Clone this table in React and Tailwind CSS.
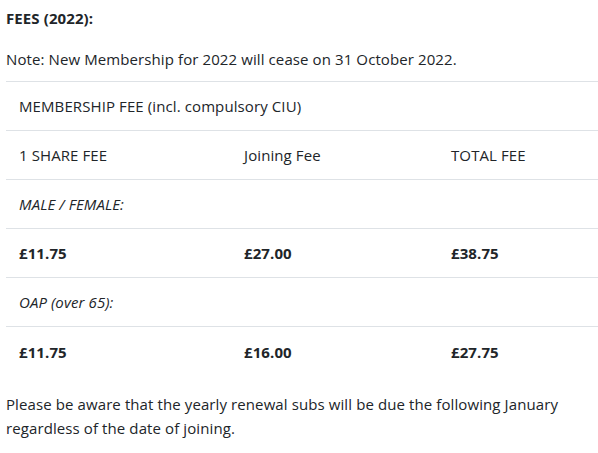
export default function App() {
  const rows = [
    { type: 'span', text: 'MEMBERSHIP FEE (incl. compulsory CIU)' },
    { type: 'cols', cells: ['1 SHARE FEE', 'Joining Fee', 'TOTAL FEE'] },
    { type: 'span', text: 'MALE / FEMALE:', italic: true },
    { type: 'cols', cells: ['£11.75', '£27.00', '£38.75'], bold: true },
    { type: 'span', text: 'OAP (over 65):', italic: true },
    { type: 'cols', cells: ['£11.75', '£16.00', '£27.75'], bold: true, last: true },
  ];

  return (
    <div className="bg-white w-[598px] h-[453px] pl-[6px] text-[15px] leading-[24px] text-[#212529] font-['Open_Sans',sans-serif] tracking-[0.1px]">
      <p className="pt-[6px] font-bold">FEES (2022):</p>
      <p className="mt-[17px]">Note: New Membership for 2022 will cease on 31 October 2022.</p>
      <div className="mt-[10px] border-t border-[#dee2e6]">
        {rows.map((r, i) => (
          <div
            key={i}
            className={`h-[49px] flex items-center ${r.last ? '' : 'border-b border-[#dee2e6]'}`}
          >
            {r.type === 'span' ? (
              <div className={`pl-[13px] ${r.italic ? 'italic' : ''}`}>{r.text}</div>
            ) : (
              <div className={`grid grid-cols-[225px_207px_1fr] w-full ${r.bold ? 'font-bold' : ''}`}>
                {r.cells.map((c, j) => (
                  <div key={j} className="pl-[13px]">{c}</div>
                ))}
              </div>
            )}
          </div>
        ))}
      </div>
      <p className="mt-[16px]">
        Please be aware that the yearly renewal subs will be due the following January regardless of the date of joining.
      </p>
    </div>
  );
}
